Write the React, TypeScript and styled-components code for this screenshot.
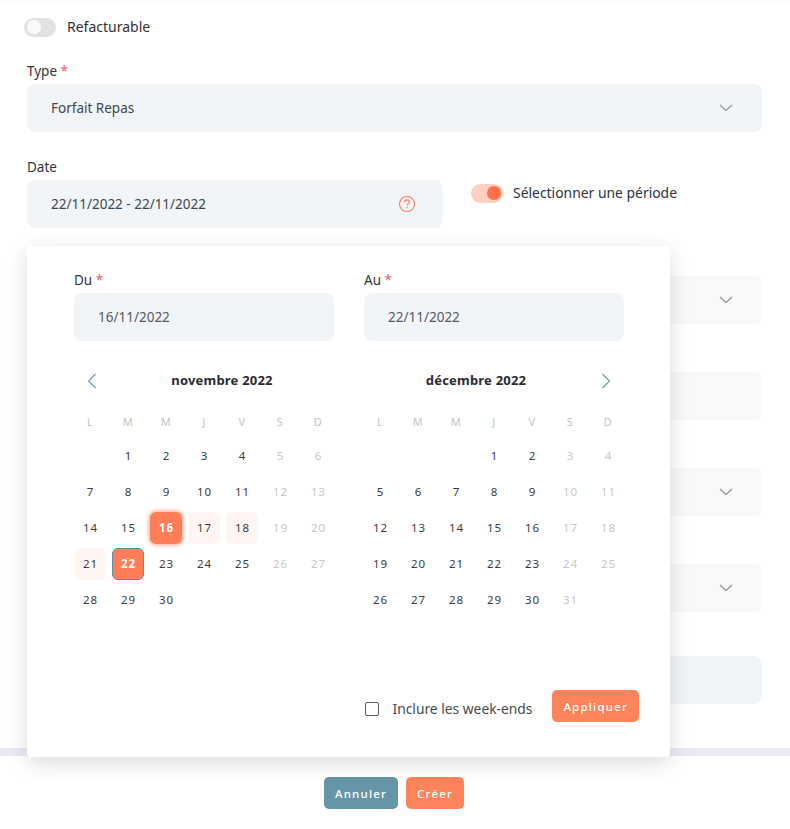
import React from "react";
import styled, { createGlobalStyle } from "styled-components";

const Global = createGlobalStyle`
  html, body { margin: 0; padding: 0; background: #fff; }
  body { font-family: "Noto Sans", "Open Sans", sans-serif; color: #2f2f33; }
`;

const Page = styled.div`
  position: relative;
  width: 790px;
  height: 829px;
  overflow: hidden;
  background: #fff;
`;

const Form = styled.div`
  height: 748px;
  box-sizing: border-box;
  padding: 16px 28px 0 27px;
  box-shadow: inset 0 5px 4px -3px rgba(0, 0, 0, 0.025);
`;

const Switch = styled.span<{ $on?: boolean }>`
  display: inline-block;
  position: relative;
  flex: none;
  width: 32px;
  height: 19px;
  border-radius: 10px;
  background: ${(p) => (p.$on ? "#ffcfc2" : "#e2e2e2")};
  &::after {
    content: "";
    position: absolute;
    top: 2.5px;
    left: ${(p) => (p.$on ? "16px" : "3px")};
    width: 14px;
    height: 14px;
    border-radius: 50%;
    background: ${(p) => (p.$on ? "#ff7048" : "#fafafa")};
  }
`;

const SwitchRow = styled.div`
  display: flex;
  align-items: center;
  gap: 10px;
  font-size: 14px;
  line-height: 20px;
  color: #33302f;
`;

const TopSwitch = styled(SwitchRow)`
  margin-left: -3px;
  gap: 11px;
  height: 22px;
`;

const Label = styled.div`
  font-size: 13.5px;
  line-height: 20px;
  color: #33343a;
  height: 23px;
`;

const Star = styled.span`
  color: #ee5b6a;
`;

const Field = styled.div<{ $muted?: boolean }>`
  display: flex;
  align-items: center;
  justify-content: space-between;
  box-sizing: border-box;
  height: 48px;
  width: 100%;
  padding: 0 29px 0 24px;
  border-radius: 8px;
  background: ${(p) => (p.$muted ? "#f9f9f9" : "#f2f5f8")};
  font-size: 13.5px;
  color: #40464d;
`;

const FieldBlock = styled.div<{ $top: number }>`
  margin-top: ${(p) => p.$top}px;
`;

const DateRow = styled.div`
  display: flex;
  gap: 28px;
  margin-top: 25px;
`;

const DateCol = styled.div`
  width: 416px;
`;

const PeriodSwitch = styled(SwitchRow)`
  margin-top: 26px;
  height: 20px;
  font-size: 13.9px;
  color: #2c3340;
`;

const Footer = styled.div`
  display: flex;
  justify-content: center;
  gap: 8px;
  height: 81px;
  box-sizing: border-box;
  padding: 21px 2px 0 0;
  border-top: 8px solid #e9eaf4;
`;

const Button = styled.button<{ $secondary?: boolean }>`
  height: 32px;
  padding: 0 11px;
  border: 0;
  border-radius: 5px;
  background: ${(p) => (p.$secondary ? "#6495a8" : "#ff845c")};
  color: #fff;
  font-family: inherit;
  font-size: 11.5px;
  font-weight: 500;
  letter-spacing: 1.2px;
`;

const Popover = styled.div`
  position: absolute;
  left: 27px;
  top: 246px;
  width: 643px;
  height: 511px;
  box-sizing: border-box;
  padding: 24px 46px 0 47px;
  background: #fff;
  border-radius: 4px;
  box-shadow: 0 6px 22px rgba(0, 0, 0, 0.14);
`;

const RangeInputs = styled.div`
  display: flex;
  gap: 30px;
`;

const RangeField = styled.div`
  width: 260px;
`;

const RangeValue = styled(Field)`
  color: #56595e;
`;

const Months = styled.div`
  display: flex;
  gap: 24px;
  margin: 28px 0 0 -3px;
`;

const Month = styled.div`
  width: 266px;
`;

const MonthHead = styled.div<{ $side: "left" | "right" }>`
  position: relative;
  box-sizing: border-box;
  padding-${(p) => p.$side}: 36px;
  text-align: center;
  height: 24px;
  font-size: 13px;
  line-height: 22px;
  font-weight: 700;
  color: #2b2b30;
  letter-spacing: 0.2px;
`;

const Nav = styled.svg<{ $side: "left" | "right" }>`
  position: absolute;
  top: 4px;
  ${(p) => p.$side}: 16px;
`;

const Grid = styled.div`
  display: grid;
  grid-template-columns: repeat(7, 38px);
  grid-template-rows: 33px;
  grid-auto-rows: 36px;
  margin-top: 12px;
`;

const Weekday = styled.div`
  display: flex;
  align-items: center;
  justify-content: center;
  padding-bottom: 1px;
  font-size: 11px;
  color: #c4c4c4;
  letter-spacing: 0.4px;
`;

type DayKind = "normal" | "off" | "range" | "start" | "end" | "empty";

const Day = styled.div<{ $kind: DayKind }>`
  display: flex;
  align-items: center;
  justify-content: center;
  width: 32px;
  height: 32px;
  margin: 2px 3px;
  padding: 0 0 2px 1px;
  box-sizing: border-box;
  border-radius: 6px;
  font-size: 11.5px;
  letter-spacing: 1px;
  color: ${(p) =>
    p.$kind === "off" ? "#c8c8c8" : p.$kind === "start" || p.$kind === "end" ? "#fff" : "#3a3a40"};
  font-weight: ${(p) => (p.$kind === "start" || p.$kind === "end" ? 700 : 400)};
  background: ${(p) =>
    p.$kind === "range" ? "#fff6f3" : p.$kind === "start" || p.$kind === "end" ? "#ff7d57" : "transparent"};
  ${(p) => (p.$kind === "start" ? "box-shadow: 0 0 4px 1px #ff9f85;" : "")}
  ${(p) => (p.$kind === "end" ? "border: 1px solid #5f8da2;" : "")}
`;

const PopFooter = styled.div`
  position: absolute;
  right: 31px;
  bottom: 35px;
  display: flex;
  align-items: center;
`;

const Check = styled.span`
  width: 12px;
  height: 12px;
  margin-top: 6px;
  border: 1px solid #5e5e5e;
  border-radius: 2px;
  margin-right: 14px;
`;

const CheckLabel = styled.span`
  margin-top: 4px;
  font-size: 13.8px;
  color: #4a4a4d;
  margin-right: 20px;
`;

const Chevron = () => (
  <svg width="14" height="8" viewBox="0 0 14 8" fill="none" stroke="#8d9299" strokeWidth="1.1">
    <path d="M1 1l6 5.5L13 1" />
  </svg>
);

const HelpIcon = styled.svg`
  margin-right: -2px;
`;

const Help = () => (
  <HelpIcon width="18" height="18" viewBox="0 0 18 18" fill="none" stroke="#ff7d5b" strokeWidth="1.1">
    <circle cx="9" cy="9" r="7.5" />
    <path d="M6.6 7.2c0-1.4 1.1-2.3 2.4-2.3s2.4.9 2.4 2.2c0 1.8-2.4 1.7-2.4 3.4" />
    <path d="M9 12.1v1.1" />
  </HelpIcon>
);

type Cell = { n?: number; k: DayKind };

const build = (lead: number, total: number, kinds: Record<number, DayKind> = {}): Cell[] => {
  const cells: Cell[] = Array.from({ length: lead }, () => ({ k: "empty" as DayKind }));
  for (let n = 1; n <= total; n++) {
    const col = (lead + n - 1) % 7;
    cells.push({ n, k: kinds[n] ?? (col >= 5 ? "off" : "normal") });
  }
  return cells;
};

const WEEK = ["L", "M", "M", "J", "V", "S", "D"];

const MonthView = ({ title, cells, nav }: { title: string; cells: Cell[]; nav: "left" | "right" }) => (
  <Month>
    <MonthHead $side={nav}>
      <Nav $side={nav} width="10" height="16" viewBox="0 0 10 16" fill="none" stroke="#6f9cad" strokeWidth="1.1">
        <path d={nav === "left" ? "M8.5 1L1.5 8l7 7" : "M1.5 1l7 7-7 7"} />
      </Nav>
      {title}
    </MonthHead>
    <Grid>
      {WEEK.map((d, i) => (
        <Weekday key={i}>{d}</Weekday>
      ))}
      {cells.map((c, i) => (
        <Day key={i} $kind={c.k}>
          {c.n}
        </Day>
      ))}
    </Grid>
  </Month>
);

export default function App() {
  return (
    <Page>
      <Global />
      <Form>
        <TopSwitch>
          <Switch />
          Refacturable
        </TopSwitch>
        <FieldBlock $top={23}>
          <Label>
            Type <Star>*</Star>
          </Label>
          <Field>
            Forfait Repas
            <Chevron />
          </Field>
        </FieldBlock>
        <DateRow>
          <DateCol>
            <Label>Date</Label>
            <Field>
              22/11/2022 - 22/11/2022
              <Help />
            </Field>
          </DateCol>
          <PeriodSwitch>
            <Switch $on />
            Sélectionner une période
          </PeriodSwitch>
        </DateRow>
        <FieldBlock $top={48}>
          <Field $muted>
            &nbsp;
            <Chevron />
          </Field>
        </FieldBlock>
        <FieldBlock $top={48}>
          <Field $muted />
        </FieldBlock>
        <FieldBlock $top={48}>
          <Field $muted>
            &nbsp;
            <Chevron />
          </Field>
        </FieldBlock>
        <FieldBlock $top={48}>
          <Field $muted>
            &nbsp;
            <Chevron />
          </Field>
        </FieldBlock>
        <FieldBlock $top={44}>
          <Field />
        </FieldBlock>
      </Form>
      <Footer>
        <Button $secondary>Annuler</Button>
        <Button>Créer</Button>
      </Footer>
      <Popover>
        <RangeInputs>
          <RangeField>
            <Label>
              Du <Star>*</Star>
            </Label>
            <RangeValue>16/11/2022</RangeValue>
          </RangeField>
          <RangeField>
            <Label>
              Au <Star>*</Star>
            </Label>
            <RangeValue>22/11/2022</RangeValue>
          </RangeField>
        </RangeInputs>
        <Months>
          <MonthView
            title="novembre 2022"
            nav="left"
            cells={build(1, 30, { 16: "start", 17: "range", 18: "range", 21: "range", 22: "end" })}
          />
          <MonthView title="décembre 2022" nav="right" cells={build(3, 31)} />
        </Months>
        <PopFooter>
          <Check />
          <CheckLabel>Inclure les week-ends</CheckLabel>
          <Button>Appliquer</Button>
        </PopFooter>
      </Popover>
    </Page>
  );
}
